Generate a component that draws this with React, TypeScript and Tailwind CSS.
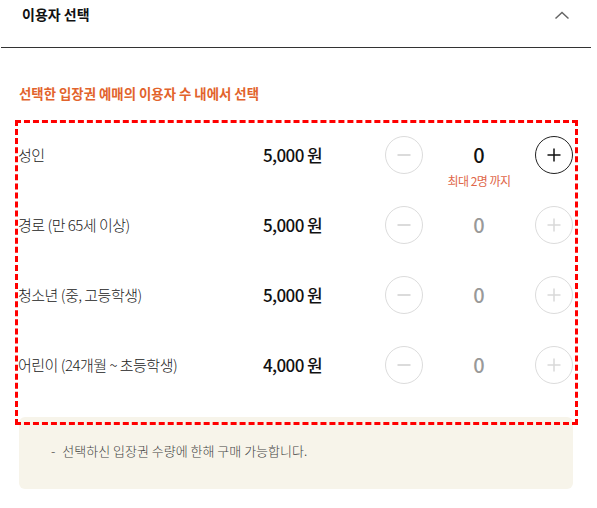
import React from 'react';

type Rate = { label: string; price: string; count: number; active: boolean };

const RATES: Rate[] = [
  { label: '성인', price: '5,000', count: 0, active: true },
  { label: '경로 (만 65세 이상)', price: '5,000', count: 0, active: false },
  { label: '청소년 (중, 고등학생)', price: '5,000', count: 0, active: false },
  { label: '어린이 (24개월 ~ 초등학생)', price: '4,000', count: 0, active: false },
];

const font = { fontFamily: '"Noto Sans CJK KR", "Noto Sans", sans-serif' };

const MinusButton: React.FC = () => (
  <button className="w-[38px] h-[38px] rounded-full border border-[#dcdcdc] bg-white flex items-center justify-center shrink-0">
    <svg width="16" height="16" viewBox="0 0 16 16">
      <line x1="1.5" y1="8" x2="14.5" y2="8" stroke="#cfcfcf" strokeWidth="1.5" />
    </svg>
  </button>
);

const PlusButton: React.FC<{ active: boolean }> = ({ active }) => (
  <button
    className={
      active
        ? 'w-[38px] h-[38px] rounded-full border border-[#222] bg-white flex items-center justify-center shrink-0'
        : 'w-[38px] h-[38px] rounded-full border border-[#dcdcdc] bg-white flex items-center justify-center shrink-0'
    }
  >
    <svg width="16" height="16" viewBox="0 0 16 16">
      <line x1="1.5" y1="8" x2="14.5" y2="8" stroke={active ? '#111' : '#d8d8d8'} strokeWidth="1.5" />
      <line x1="8" y1="1.5" x2="8" y2="14.5" stroke={active ? '#111' : '#d8d8d8'} strokeWidth="1.5" />
    </svg>
  </button>
);

const App: React.FC = () => {
  return (
    <div className="w-[597px] min-h-[508px] bg-white" style={font}>
      <div className="ml-px w-[590px] h-[48px] border-b border-[#333] flex justify-between">
        <h2 className="pl-[21px] pt-[4px] text-[14px] leading-[20px] font-bold text-[#111]">이용자 선택</h2>
        <svg className="mt-[11px] mr-[21px]" width="16" height="9" viewBox="0 0 16 9">
          <polyline points="1.5,7.5 8,1.5 14.5,7.5" fill="none" stroke="#666" strokeWidth="1.5" />
        </svg>
      </div>

      <p className="mt-[35px] pl-[19px] text-[13.4px] leading-[20px] font-bold text-[#e2632c]">
        선택한 입장권 예매의 이용자 수 내에서 선택
      </p>

      <div className="mt-[20px] ml-[18px] w-[557px] outline-3 outline-dashed outline-[#ff0000] pt-[13px] pb-[38px] pr-[2px] flex flex-col gap-[32px]">
        {RATES.map((rate, idx) => (
          <div key={idx} className="h-[38px] flex items-center">
            <span className="flex-1 text-[15px] font-light text-[#222] tracking-[-0.5px]">{rate.label}</span>
            <span className="text-[17px] font-medium text-[#111] tracking-[-0.6px]">{rate.price} 원</span>
            <div className="ml-[63px] flex items-center">
              <MinusButton />
              <div className="relative w-[112px] text-center">
                <span className={rate.active ? 'text-[20px] font-medium text-[#111]' : 'text-[20px] font-medium text-[#999]'}>
                  {rate.count}
                </span>
                {rate.active && (
                  <span className="absolute left-0 right-0 top-[33px] text-[12px] leading-[16px] text-[#e0674a] tracking-[-0.5px]">
                    최대 2명 까지
                  </span>
                )}
              </div>
              <PlusButton active={rate.active} />
            </div>
          </div>
        ))}
      </div>

      <div className="-mt-[5px] ml-[19px] w-[554px] rounded-md bg-[#f7f4ea] pl-[32px] pt-[25px] pb-[29px] text-[13px] leading-[18px] font-light text-[#444]">
        -<span className="ml-[7px]">선택하신 입장권 수량에 한해 구매 가능합니다.</span>
      </div>
    </div>
  );
};

export default App;
